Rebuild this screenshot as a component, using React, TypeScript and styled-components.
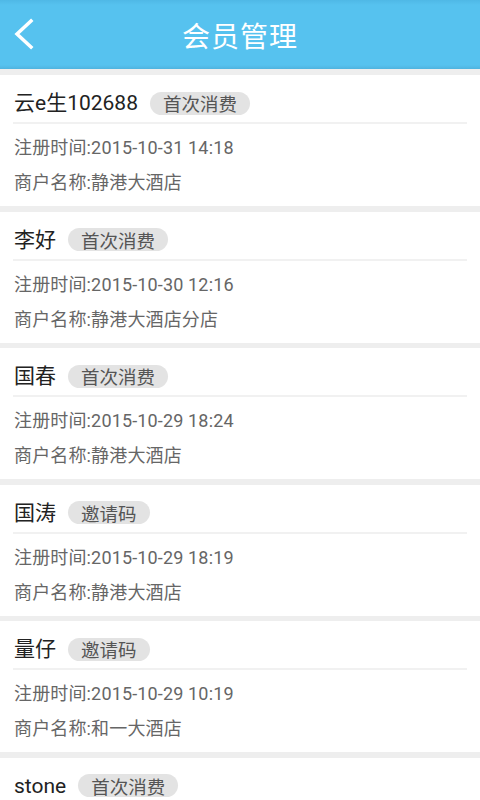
import React from "react";
import styled, { createGlobalStyle } from "styled-components";

const Global = createGlobalStyle`
  html, body { margin: 0; padding: 0; background: #eeeeee; }
  body { font-family: Roboto, "Noto Sans CJK SC", sans-serif; }
  * { box-sizing: border-box; }
`;

const Page = styled.div`
  width: 480px;
  height: 800px;
  overflow: hidden;
  background: #eeeeee;
  display: flex;
  flex-direction: column;
`;

const Header = styled.header`
  height: 69px;
  flex: none;
  background: linear-gradient(#4fb8e6 0px, #56c2ef 5px, #56c2ef 65px, #4fb3df 69px);
  display: flex;
  align-items: center;
  justify-content: center;
  position: relative;
`;

const Back = styled.button`
  position: absolute;
  left: 12px;
  top: 17px;
  width: 26px;
  height: 34px;
  padding: 0;
  border: 0;
  background: transparent;
  display: flex;
`;

const Title = styled.h1`
  margin: 0;
  color: #ffffff;
  font-size: 28px;
  font-weight: 400;
  letter-spacing: 1px;
  font-family: "Noto Sans CJK SC", sans-serif;
`;

const List = styled.div`
  display: flex;
  flex-direction: column;
  gap: 5.5px;
  padding-top: 6px;
`;

const Card = styled.div`
  background: #ffffff;
  padding: 0 13px;
  flex: none;
`;

const NameRow = styled.div`
  height: 49px;
  display: flex;
  align-items: center;
  padding-left: 1px;
  padding-top: 9px;
  border-bottom: 2px solid #f1f1f1;
`;

const Name = styled.span`
  font-size: 21px;
  color: #222222;
  margin-right: 12px;
  line-height: 24px;
`;

const Badge = styled.span`
  display: inline-flex;
  align-items: center;
  height: 23px;
  padding: 0 13px;
  border-radius: 12px;
  background: #e3e3e3;
  color: #555555;
  font-size: 18.5px;
  font-family: "Noto Sans CJK SC", sans-serif;
`;

const Info = styled.div`
  padding: 6px 0 6px 1px;
`;

const Line = styled.div`
  height: 35px;
  line-height: 35px;
  font-size: 18px;
  color: #666666;
  white-space: nowrap;
  letter-spacing: 0.15px;
`;

const members = [
  { name: "云e生102688", tag: "首次消费", time: "2015-10-31 14:18", shop: "静港大酒店" },
  { name: "李好", tag: "首次消费", time: "2015-10-30 12:16", shop: "静港大酒店分店" },
  { name: "国春", tag: "首次消费", time: "2015-10-29 18:24", shop: "静港大酒店" },
  { name: "国涛", tag: "邀请码", time: "2015-10-29 18:19", shop: "静港大酒店" },
  { name: "量仔", tag: "邀请码", time: "2015-10-29 10:19", shop: "和一大酒店" },
  { name: "stone", tag: "首次消费", time: "2015-10-29 09:50", shop: "静港大酒店" },
];

export default function App() {
  return (
    <Page>
      <Global />
      <Header>
        <Back aria-label="返回">
          <svg width="26" height="34" viewBox="0 0 26 34">
            <path d="M19 4 L5 17 L19 30" fill="none" stroke="#fff" strokeWidth="3.5" strokeLinecap="square" />
          </svg>
        </Back>
        <Title>会员管理</Title>
      </Header>
      <List>
        {members.map((m, i) => (
          <Card key={i}>
            <NameRow>
              <Name>{m.name}</Name>
              <Badge>{m.tag}</Badge>
            </NameRow>
            <Info>
              <Line>注册时间:{m.time}</Line>
              <Line>商户名称:{m.shop}</Line>
            </Info>
          </Card>
        ))}
      </List>
    </Page>
  );
}
